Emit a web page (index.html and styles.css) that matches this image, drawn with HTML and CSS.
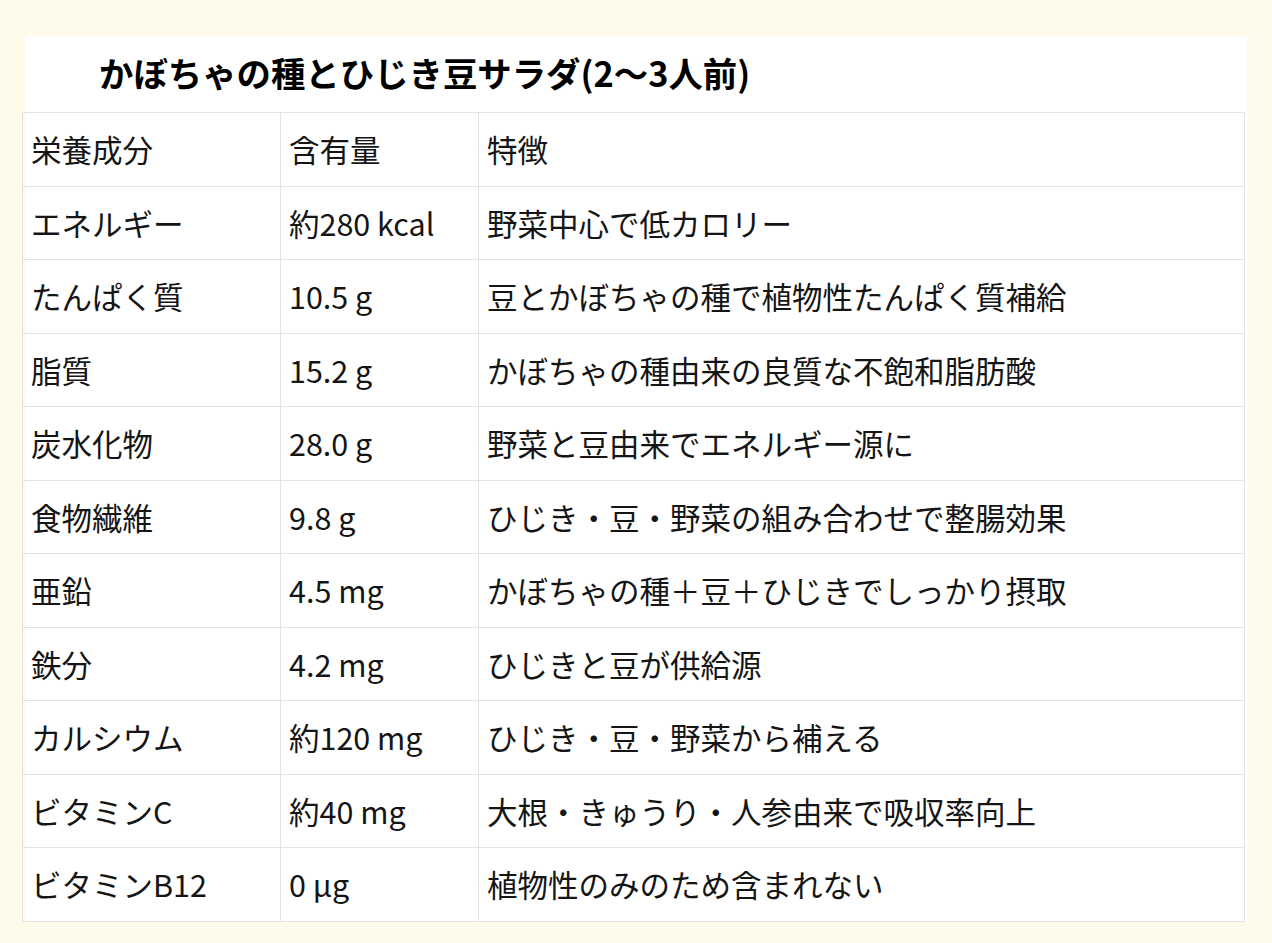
FILE: index.html
```html
<!DOCTYPE html>
<html lang="ja">
<head>
<meta charset="utf-8">
<title>かぼちゃの種とひじき豆サラダ</title>
<link rel="stylesheet" href="styles.css">
</head>
<body>
<div class="card">
  <h1 class="title">かぼちゃの種とひじき豆サラダ(2〜3人前)</h1>
  <table class="nutri">
    <colgroup>
      <col class="c1"><col class="c2"><col class="c3">
    </colgroup>
    <tr><td>栄養成分</td><td>含有量</td><td>特徴</td></tr>
    <tr><td>エネルギー</td><td>約280 kcal</td><td>野菜中心で低カロリー</td></tr>
    <tr><td>たんぱく質</td><td>10.5 g</td><td>豆とかぼちゃの種で植物性たんぱく質補給</td></tr>
    <tr><td>脂質</td><td>15.2 g</td><td>かぼちゃの種由来の良質な不飽和脂肪酸</td></tr>
    <tr><td>炭水化物</td><td>28.0 g</td><td>野菜と豆由来でエネルギー源に</td></tr>
    <tr><td>食物繊維</td><td>9.8 g</td><td>ひじき・豆・野菜の組み合わせで整腸効果</td></tr>
    <tr><td>亜鉛</td><td>4.5 mg</td><td>かぼちゃの種＋豆＋ひじきでしっかり摂取</td></tr>
    <tr><td>鉄分</td><td>4.2 mg</td><td>ひじきと豆が供給源</td></tr>
    <tr><td>カルシウム</td><td>約120 mg</td><td>ひじき・豆・野菜から補える</td></tr>
    <tr><td>ビタミンC</td><td>約40 mg</td><td>大根・きゅうり・人参由来で吸収率向上</td></tr>
    <tr><td>ビタミンB12</td><td>0 µg</td><td>植物性のみのため含まれない</td></tr>
  </table>
</div>
</body>
</html>
```

FILE: styles.css
```css
html, body {
  margin: 0;
  padding: 0;
  background: #fffbeb;
}
body {
  font-family: "Noto Sans CJK JP", "Noto Sans", sans-serif;
  color: #111;
  padding: 36px 0 0 26px;
}
.card {
  width: 1221px;
  background: #ffffff;
}
.title {
  margin: 0;
  height: 76px;
  padding-left: 73px;
  font-size: 34.4px;
  font-weight: 700;
  line-height: 72px;
  color: #000;
  box-sizing: border-box;
}
.nutri {
  margin-left: -4px;
  width: 1223px;
  border-collapse: collapse;
  table-layout: fixed;
  font-size: 30.5px;
}
.c1 { width: 258px; }
.c2 { width: 198px; }
.nutri td {
  border: 1px solid #e3e3e3;
  padding: 15px 8px 15px 8px;
  line-height: 42.5px;
  white-space: nowrap;
  color: #151515;
}
```
